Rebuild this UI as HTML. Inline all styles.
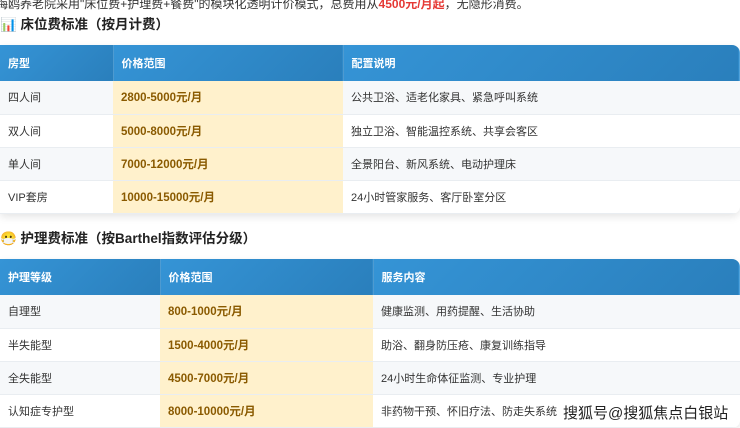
<!DOCTYPE html>
<html><head><meta charset="utf-8"><style>
*{margin:0;padding:0;box-sizing:border-box}
body{width:740px;height:428px;overflow:hidden;background:#fff;font-family:"Liberation Sans","Noto Sans CJK SC",sans-serif;color:#333;position:relative}
.intro{position:absolute;left:-4px;top:-5px;font-size:12px;color:#333;white-space:nowrap}
.intro b{color:#e53935}
h3{position:absolute;left:0;font-size:13.5px;font-weight:bold;color:#222;white-space:nowrap}
table{position:absolute;left:0;width:740px;border-collapse:collapse;box-shadow:0 3px 8px rgba(0,0,0,.1);border-radius:0 8px 8px 0;overflow:hidden;font-size:11px}
th{background:linear-gradient(135deg,#3594d6,#2a7fbc);color:#fff;text-align:left;font-weight:bold;padding:0 8px;height:36px;border-right:1px solid rgba(255,255,255,.15)}
td{height:33px;padding:0 8px;border-bottom:1px solid #e9edf1}
tr:nth-child(even) td{background:#f6f8fa}
tr:nth-child(odd) td{background:#fff}
td.p{background:#fff1cc!important;color:#8a5a00;font-weight:bold;font-size:11.5px}
.wm{position:absolute;left:563px;top:402px;font-size:15px;color:#222;text-shadow:0 0 2px #fff,0 0 2px #fff,0 0 1px #fff;white-space:nowrap}
</style></head><body>
<div class="intro">梅鸥养老院采用"床位费+护理费+餐费"的模块化透明计价模式，总费用从<b>4500元/月起</b>，无隐形消费。</div>
<h3 style="top:13px">📊 床位费标准（按月计费）</h3>
<table style="top:45px">
<tr><th style="width:113px">房型</th><th style="width:230px">价格范围</th><th>配置说明</th></tr>
<tr><td>四人间</td><td class="p">2800-5000元/月</td><td>公共卫浴、适老化家具、紧急呼叫系统</td></tr>
<tr><td>双人间</td><td class="p">5000-8000元/月</td><td>独立卫浴、智能温控系统、共享会客区</td></tr>
<tr><td>单人间</td><td class="p">7000-12000元/月</td><td>全景阳台、新风系统、电动护理床</td></tr>
<tr><td>VIP套房</td><td class="p">10000-15000元/月</td><td>24小时管家服务、客厅卧室分区</td></tr>
</table>
<h3 style="top:227px">😷 护理费标准（按Barthel指数评估分级）</h3>
<table style="top:259px">
<tr><th style="width:160px">护理等级</th><th style="width:213px">价格范围</th><th>服务内容</th></tr>
<tr><td>自理型</td><td class="p">800-1000元/月</td><td>健康监测、用药提醒、生活协助</td></tr>
<tr><td>半失能型</td><td class="p">1500-4000元/月</td><td>助浴、翻身防压疮、康复训练指导</td></tr>
<tr><td>全失能型</td><td class="p">4500-7000元/月</td><td>24小时生命体征监测、专业护理</td></tr>
<tr><td>认知症专护型</td><td class="p">8000-10000元/月</td><td>非药物干预、怀旧疗法、防走失系统</td></tr>
</table>
<div class="wm">搜狐号@搜狐焦点白银站</div>
</body></html>
